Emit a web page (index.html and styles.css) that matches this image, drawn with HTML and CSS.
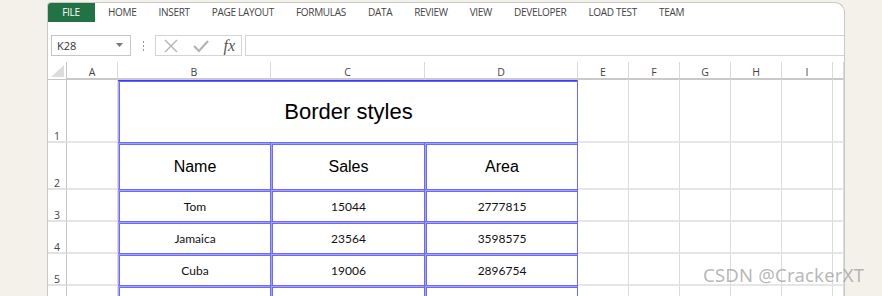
FILE: index.html
```html
<!DOCTYPE html>
<html lang="en">
<head>
    <meta charset="UTF-8">
    <title>Border styles</title>
    <link rel="stylesheet" href="styles.css">
</head>
<body>
    <div class="window">
        <div class="tabs">
            <div class="tab file">FILE</div>
            <div class="tab">HOME</div>
            <div class="tab">INSERT</div>
            <div class="tab">PAGE LAYOUT</div>
            <div class="tab">FORMULAS</div>
            <div class="tab">DATA</div>
            <div class="tab">REVIEW</div>
            <div class="tab">VIEW</div>
            <div class="tab">DEVELOPER</div>
            <div class="tab">LOAD TEST</div>
            <div class="tab">TEAM</div>
        </div>

        <div class="formula-bar">
            <div class="name-box">
                <span>K28</span>
                <svg width="8" height="5" viewBox="0 0 8 5"><path d="M0 0 L7 0 L3.5 4 Z" fill="#777"/></svg>
            </div>
            <div class="grip">
                <svg width="3" height="10" viewBox="0 0 3 10"><rect x="1" y="0" width="1" height="2" fill="#999"/><rect x="1" y="4" width="1" height="2" fill="#999"/><rect x="1" y="8" width="1" height="2" fill="#999"/></svg>
            </div>
            <div class="fx-box">
                <svg width="14" height="14" viewBox="0 0 14 14"><path d="M1 1 L13 13 M13 1 L1 13" stroke="#b4b4b4" stroke-width="1.4"/></svg>
                <svg width="16" height="14" viewBox="0 0 16 14"><path d="M1 7 L6 12 L15 2" stroke="#b4b4b4" stroke-width="2.2" fill="none"/></svg>
                <span class="fx">fx</span>
            </div>
            <div class="formula-input"></div>
        </div>

        <div class="sheet">
            <div class="corner"><svg width="13" height="12" viewBox="0 0 13 12"><path d="M13 0 L13 12 L0 12 Z" fill="#dcdcdc"/></svg></div>
            <div class="col">A</div>
            <div class="col">B</div>
            <div class="col">C</div>
            <div class="col">D</div>
            <div class="col">E</div>
            <div class="col">F</div>
            <div class="col">G</div>
            <div class="col">H</div>
            <div class="col">I</div>
            <div class="col"></div>

            <div class="row-num">1</div>
            <div class="cell"></div>
            <div class="cell blue title span3">Border styles</div>
            <div class="cell"></div><div class="cell"></div><div class="cell"></div><div class="cell"></div><div class="cell"></div><div class="cell"></div>

            <div class="row-num">2</div>
            <div class="cell"></div>
            <div class="cell blue head">Name</div>
            <div class="cell blue head">Sales</div>
            <div class="cell blue head">Area</div>
            <div class="cell"></div><div class="cell"></div><div class="cell"></div><div class="cell"></div><div class="cell"></div><div class="cell"></div>

            <div class="row-num">3</div>
            <div class="cell"></div>
            <div class="cell blue">Tom</div>
            <div class="cell blue">15044</div>
            <div class="cell blue">2777815</div>
            <div class="cell"></div><div class="cell"></div><div class="cell"></div><div class="cell"></div><div class="cell"></div><div class="cell"></div>

            <div class="row-num">4</div>
            <div class="cell"></div>
            <div class="cell blue">Jamaica</div>
            <div class="cell blue">23564</div>
            <div class="cell blue">3598575</div>
            <div class="cell"></div><div class="cell"></div><div class="cell"></div><div class="cell"></div><div class="cell"></div><div class="cell"></div>

            <div class="row-num">5</div>
            <div class="cell"></div>
            <div class="cell blue">Cuba</div>
            <div class="cell blue">19006</div>
            <div class="cell blue">2896754</div>
            <div class="cell"></div><div class="cell"></div><div class="cell"></div><div class="cell"></div><div class="cell"></div><div class="cell"></div>

            <div class="row-num"></div>
            <div class="cell"></div>
            <div class="cell blue"></div>
            <div class="cell blue"></div>
            <div class="cell blue"></div>
            <div class="cell"></div><div class="cell"></div><div class="cell"></div><div class="cell"></div><div class="cell"></div><div class="cell"></div>
        </div>
    </div>

    <div class="watermark">CSDN @CrackerXT</div>
</body>
</html>
```

FILE: styles.css
```css
body {
    margin: 0;
    background-color: #f4f1eb;
    font-family: "Open Sans", Arial, sans-serif;
    height: 296px;
    overflow: hidden;
    position: relative;
}
.window {
    margin: 2px 0 0 47px;
    width: 796px;
    height: 300px;
    background-color: #fff;
    border: 1px solid #c9c9c9;
    border-bottom: none;
    border-radius: 4px 10px 0 0;
    overflow: hidden;
}
.tabs {
    display: flex;
    height: 20px;
    margin-top: -1px;
}
.tab {
    font-size: 10px;
    letter-spacing: -0.3px;
    color: #444;
    line-height: 20px;
    padding: 0 11px;
}
.tab.file {
    background-color: #217346;
    color: #fff;
    width: 48px;
    padding: 0;
    margin-left: -1px;
    margin-right: 2px;
    text-align: center;
    border-top-left-radius: 4px;
}
.formula-bar {
    display: flex;
    align-items: stretch;
    height: 21px;
    margin-top: 13px;
}
.name-box {
    width: 80px;
    margin-left: 3px;
    border: 1px solid #c6c6c6;
    display: flex;
    align-items: center;
    justify-content: space-between;
    padding: 0 6px 0 5px;
    box-sizing: border-box;
    font-size: 11px;
    color: #333;
}
.grip {
    width: 24px;
    display: flex;
    align-items: center;
    justify-content: center;
}
.fx-box {
    width: 87px;
    border: 1px solid #d4d4d4;
    box-sizing: border-box;
    display: flex;
    align-items: center;
    justify-content: space-between;
    padding: 0 6px 0 8px;
}
.fx {
    font-family: "Liberation Serif", serif;
    font-style: italic;
    font-size: 16px;
    color: #555;
    line-height: 1;
}
.formula-input {
    flex: 1;
    margin-left: 3px;
    border-top: 1px solid #d4d4d4;
    border-bottom: 1px solid #d4d4d4;
    border-left: 1px solid #d4d4d4;
}
.sheet {
    display: grid;
    grid-template-columns: 19px 51px 153px 154px 153px 51px 51px 51px 51px 51px 1fr;
    grid-template-rows: 18px 63px 47px 32px 32px 32px 32px;
    margin-top: 6px;
}
.sheet > div {
    box-sizing: border-box;
}
.corner {
    border-right: 1px solid #c6c6c6;
    border-bottom: 1px solid #c6c6c6;
    display: flex;
    align-items: flex-end;
    justify-content: flex-end;
    padding: 0 2px 2px 0;
}
.col {
    font-size: 10.5px;
    color: #444;
    text-align: center;
    line-height: 17px;
    padding-top: 2px;
    border-right: 1px solid #dadada;
    border-bottom: 2px solid #c9c9c9;
}
.row-num {
    font-size: 10.5px;
    line-height: 1;
    color: #444;
    text-align: center;
    border-right: 1px solid #c6c6c6;
    border-bottom: 2px solid #e2e2e2;
    display: flex;
    align-items: flex-end;
    justify-content: center;
    padding-bottom: 0;
}
.cell {
    border-right: 1px solid #dcdcdc;
    border-bottom: 2px solid #e6e6e6;
    display: flex;
    align-items: center;
    justify-content: center;
    font-family: Lato, "Open Sans", sans-serif;
    font-size: 12px;
    color: #111;
}
.cell.blue {
    border-right: 1px solid #6a6aff;
    border-bottom: 1px solid #6a6aff;
    box-shadow: inset 1px 1px 0 #a4a4ff, inset 2px 2px 0 #6a6aff;
    padding: 2px 0 0 2px;
}
.span3 {
    grid-column: span 3;
}
.title {
    font-family: "Liberation Sans", Arial, sans-serif;
    font-size: 22px;
    color: #000;
    box-shadow: inset 0 1px 0 #3a3aff, inset 1px 0 0 #a4a4ff, inset 2px 2px 0 #6a6aff !important;
}
.head {
    font-family: "Liberation Sans", Arial, sans-serif;
    font-size: 16px;
    color: #000;
    padding-top: 6px;
}
.watermark {
    position: absolute;
    left: 703px;
    top: 262px;
    font-family: "Noto Sans", sans-serif;
    font-size: 18.5px;
    color: rgba(160, 160, 160, 0.75);
    letter-spacing: 0.2px;
}
```
